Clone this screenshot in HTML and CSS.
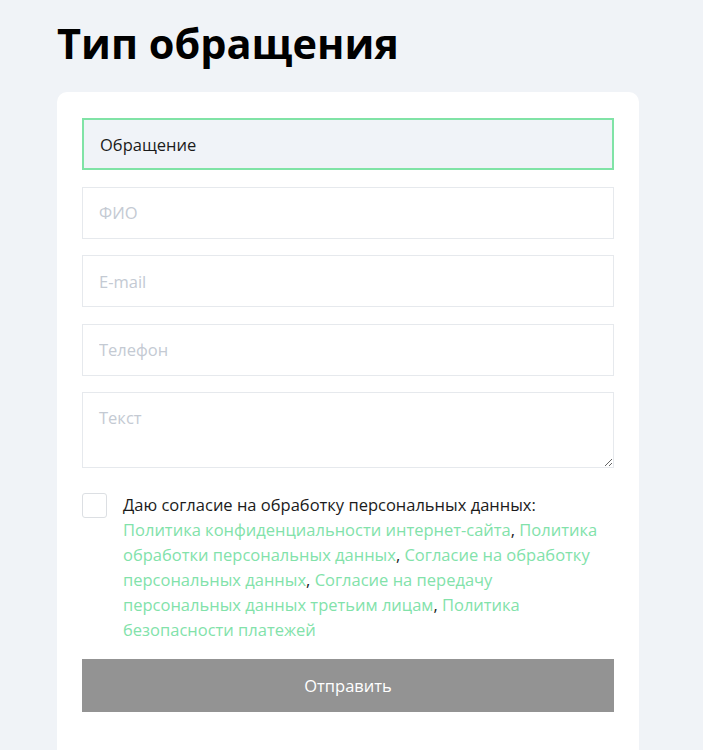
FILE: index.html
```html
<!DOCTYPE html>
<html lang="ru">
<head>
<meta charset="utf-8">
<title>Тип обращения</title>
<link rel="stylesheet" href="styles.css">
</head>
<body>
<div class="page">
  <h1 class="title">Тип обращения</h1>
  <form class="card">
    <div class="field field-active">Обращение</div>
    <input class="field" type="text" placeholder="ФИО">
    <input class="field" type="text" placeholder="E-mail">
    <input class="field" type="text" placeholder="Телефон">
    <textarea class="field area" placeholder="Текст"></textarea>
    <label class="consent">
      <span class="box"></span>
      <span class="consent-text">Даю согласие на обработку персональных данных:<span class="links"><a href="#">Политика конфиденциальности интернет-сайта</a>, <a href="#">Политика обработки персональных данных</a>, <a href="#">Согласие на обработку персональных данных</a>, <a href="#">Согласие на передачу персональных данных третьим лицам</a>, <a href="#">Политика безопасности платежей</a></span></span>
    </label>
    <button class="submit" type="button">Отправить</button>
  </form>
</div>
</body>
</html>
```
FILE: styles.css
```css
html, body {
  margin: 0;
  padding: 0;
  background: #f0f3f7;
  font-family: "Open Sans", "Noto Sans", sans-serif;
  color: #1b1b1b;
}
.page {
  padding-left: 57px;
  width: 582px;
  height: 750px;
  overflow: hidden;
}
.title {
  margin: 19px 0 25px;
  font-size: 41.5px;
  line-height: 48px;
  font-weight: 700;
  color: #000;
}
.card {
  background: #fff;
  border-radius: 10px;
  padding: 26px 25px 40px;
  display: flex;
  flex-direction: column;
  min-height: 700px;
  box-sizing: border-box;
}
.field {
  box-sizing: border-box;
  height: 52px;
  margin: 0 0 16.5px;
  padding: 0 16px;
  border: 1px solid #e6e9ed;
  background: #fff;
  font-family: inherit;
  font-size: 16.5px;
  color: #1b1b1b;
  outline: none;
  width: 100%;
}
.field::placeholder {
  color: #c4cad3;
}
.field-active {
  display: flex;
  align-items: center;
  background: #f0f3f8;
  border-color: #80e3a6;
  border-width: 2px;
  padding-left: 16px;
}
.area {
  height: 76px;
  padding: 14px 16px;
  line-height: 22px;
  resize: vertical;
  margin-bottom: 24px;
}
.consent {
  display: flex;
  gap: 16px;
  font-size: 16.5px;
  line-height: 25px;
}
.box {
  flex: 0 0 auto;
  width: 25px;
  height: 25px;
  box-sizing: border-box;
  border: 1px solid #dcdfe3;
  border-radius: 3px;
  margin-top: 1px;
}
.links {
  display: block;
}
.links a {
  color: #82e2aa;
  text-decoration: none;
}
.submit {
  margin-top: 17px;
  height: 53px;
  border: none;
  background: #939393;
  color: #fff;
  font-family: inherit;
  font-size: 16.5px;
  cursor: pointer;
}
```
